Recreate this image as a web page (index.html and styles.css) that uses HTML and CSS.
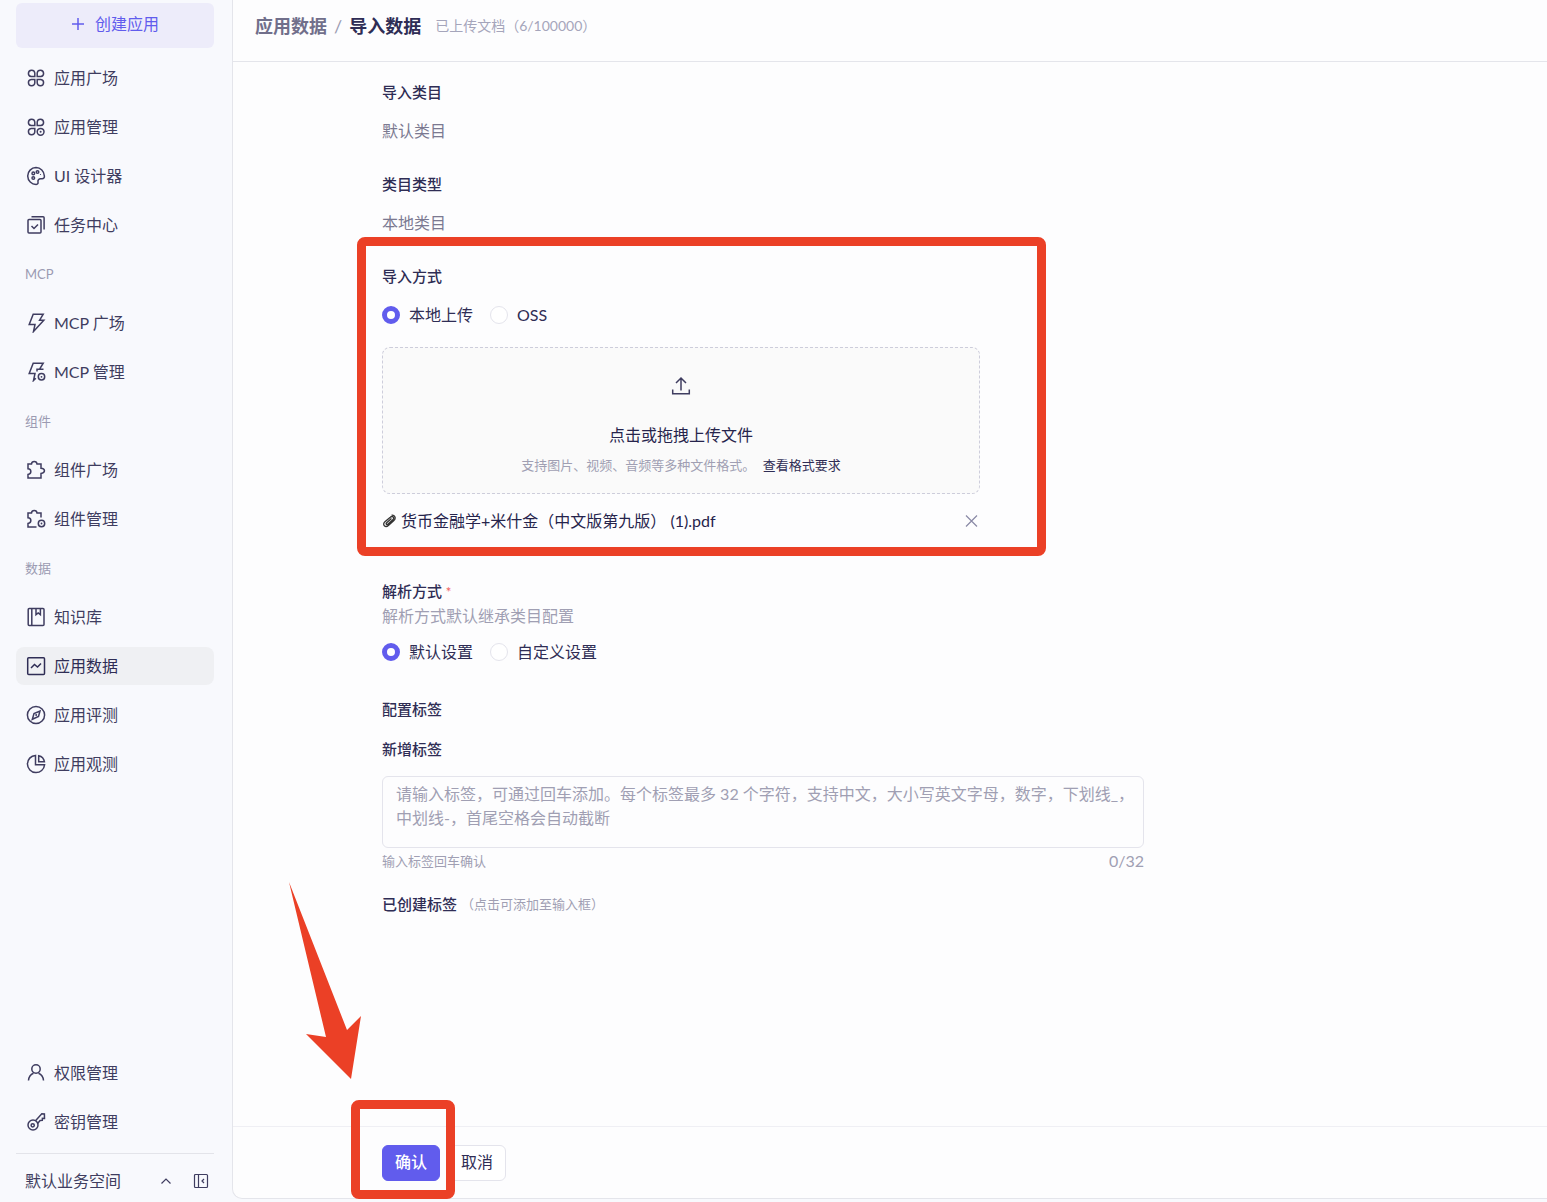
FILE: index.html
```html
<!DOCTYPE html>
<html lang="zh-CN">
<head>
  <meta charset="UTF-8">
  <title>导入数据</title>
  <link rel="stylesheet" href="styles.css">
</head>
<body>
  <div class="layout">
    <aside class="sidebar">
      <button class="create" type="button">
        <svg class="icon-plus" viewBox="0 0 14 14"><path d="M7 1v12M1 7h12"/></svg>
        创建应用
      </button>

      <nav class="nav">
        <a class="nav-item" href="#">
          <svg class="icon" viewBox="0 0 20 20"><path d="M8.8 8.6V5A3.2 3.2 0 1 0 5.2 8.6zM11.2 8.6V5a3.2 3.2 0 1 1 3.6 3.6zM8.8 11.4V15a3.2 3.2 0 1 1-3.6-3.6zM11.2 11.4V15a3.2 3.2 0 1 0 3.6-3.6z"/></svg>
          应用广场
        </a>
        <a class="nav-item" href="#">
          <svg class="icon" viewBox="0 0 20 20"><path d="M8.8 8.6V5A3.2 3.2 0 1 0 5.2 8.6zM11.2 8.6V5a3.2 3.2 0 1 1 3.6 3.6zM8.8 11.4V15a3.2 3.2 0 1 1-3.6-3.6z"/><circle cx="14.6" cy="14.8" r="3.4"/><circle class="dot" cx="14.6" cy="14.8" r="1"/></svg>
          应用管理
        </a>
        <a class="nav-item" href="#">
          <svg class="icon" viewBox="0 0 20 20"><path d="M10 1.6a8.4 8.4 0 1 0 .2 16.8c1.700 0 2-1.200 1.800-2.400-.400-2 .700-3.200 2.700-3.200h1.500c1.500 0 2.300-1 2.200-2.700C18.200 5.200 14.500 1.600 10 1.600z"/><circle cx="11.500" cy="6" r="1.300"/><circle cx="7.300" cy="7.400" r="1.300"/><circle cx="7.300" cy="12" r="1.300"/><circle class="dot" cx="14.500" cy="8.500" r=".6"/></svg>
          UI 设计器
        </a>
        <a class="nav-item" href="#">
          <svg class="icon" viewBox="0 0 20 20"><rect x="2" y="4.500" width="13" height="13.500" rx="1"/><path d="M5.500 1.700h11.600a1 1 0 0 1 1 1v11.800M5.500 11l2.500 2.500 4-4"/></svg>
          任务中心
        </a>

        <div class="nav-group">MCP</div>
        <a class="nav-item" href="#">
          <svg class="icon" viewBox="0 0 20 20"><path d="M7.200 1.200h10l-3.600 6h4.200L7.500 18.500l1.500-7H3.200z"/></svg>
          MCP 广场
        </a>
        <a class="nav-item" href="#">
          <svg class="icon" viewBox="0 0 20 20"><path d="M11 9.500V7.200h6.500M13.600 7.200l3.600-6h-10l-4 10.300H9l-1.500 7 2.300-2.200"/><circle cx="15.500" cy="14.800" r="3.200"/><circle class="dot" cx="15.500" cy="14.800" r=".9"/></svg>
          MCP 管理
        </a>

        <div class="nav-group">组件</div>
        <a class="nav-item" href="#">
          <svg class="icon" viewBox="0 0 20 20"><path d="M2 4h3.500c.300-3.400 5.200-3.400 5.500 0h4v4.300c4.600.300 4.600 4.800 0 5.100V18H2v-3.500c3.800-.500 3.800-5.500 0-5.800z"/></svg>
          组件广场
        </a>
        <a class="nav-item" href="#">
          <svg class="icon" viewBox="0 0 20 20"><path d="M15 8.500V4h-4C10.700.6 5.800.6 5.500 4H2v4.700c3.800.3 3.800 5.300 0 5.800V18h8.500"/><circle cx="15.500" cy="14.500" r="3.200"/><circle class="dot" cx="15.500" cy="14.500" r=".9"/></svg>
          组件管理
        </a>

        <div class="nav-group">数据</div>
        <a class="nav-item" href="#">
          <svg class="icon" viewBox="0 0 20 20"><rect x="2.200" y="1.500" width="15.800" height="17" rx="1"/><path d="M5.800 1.500v17M10 1.500v6.200l2.200-1.700 2.200 1.700V1.500"/></svg>
          知识库
        </a>
        <a class="nav-item active" href="#">
          <svg class="icon" viewBox="0 0 20 20"><rect x="1.700" y="1.700" width="16.800" height="16.800" rx="1"/><path d="M5 12l3.500-3.500 3 2.500L15 7.500"/></svg>
          应用数据
        </a>
        <a class="nav-item" href="#">
          <svg class="icon" viewBox="0 0 20 20"><circle cx="10" cy="10" r="8.600"/><path d="M14 6l-1.500 5.500-6.200 2.800L8 8.500z"/><circle class="dot" cx="10.200" cy="10" r="1"/></svg>
          应用评测
        </a>
        <a class="nav-item" href="#">
          <svg class="icon" viewBox="0 0 20 20"><path d="M9.500 1.400a8.600 8.600 0 1 0 9.100 9.400H9.500z"/><path d="M12.700 1.700v6h5.700c-.500-3.200-2.500-5.300-5.700-6z"/></svg>
          应用观测
        </a>
      </nav>

      <nav class="nav nav-bottom">
        <a class="nav-item" href="#">
          <svg class="icon" viewBox="0 0 20 20"><circle cx="10" cy="6" r="4.200"/><path d="M2.500 17.500c.300-3.700 2.200-6 5-7.200M17.500 17.500c-.300-3.700-2.200-6-5-7.200"/></svg>
          权限管理
        </a>
        <a class="nav-item" href="#">
          <svg class="icon" viewBox="0 0 20 20"><circle cx="7" cy="13" r="5"/><circle cx="6.700" cy="13.300" r="1.600"/><path d="M9.500 8.700l6.300-6.900 2.600.2.100 4.500-2.100-.2-.1 2-2.200.2-2.500 3"/></svg>
          密钥管理
        </a>
      </nav>

      <div class="workspace">
        <span class="workspace-name">默认业务空间</span>
        <button class="icon-btn" type="button" aria-label="切换业务空间">
          <svg class="icon-sm" viewBox="0 0 16 16"><path d="M3.500 10.500L8 6l4.500 4.500"/></svg>
        </button>
        <button class="icon-btn" type="button" aria-label="收起侧栏">
          <svg class="icon-sm" viewBox="0 0 16 16"><rect x="1.500" y="1.500" width="13" height="13" rx="1"/><path d="M5.500 1.500v13M11 6L9 8l2 2"/></svg>
        </button>
      </div>
    </aside>

    <main class="main">
      <header class="header">
        <a class="crumb" href="#">应用数据</a>
        <span class="slash">/</span>
        <h1 class="title">导入数据</h1>
        <span class="count">已上传文档（6/100000）</span>
      </header>

      <form class="form">
        <section class="field">
          <h2 class="label">导入类目</h2>
          <p class="value">默认类目</p>
        </section>

        <section class="field">
          <h2 class="label">类目类型</h2>
          <p class="value">本地类目</p>
        </section>

        <section class="field marked">
          <h2 class="label">导入方式</h2>
          <div class="radios">
            <label class="radio"><input type="radio" name="method" checked>本地上传</label>
            <label class="radio"><input type="radio" name="method">OSS</label>
          </div>
          <div class="upload">
            <svg class="icon" viewBox="0 0 20 20"><path d="M10 14.500V2M5 7l5-5 5 5M1.700 13.500v4.300h16.600v-4.300"/></svg>
            <label class="upload-title" for="file">点击或拖拽上传文件</label>
            <input class="file-input" type="file" id="file">
            <p class="upload-tip">支持图片、视频、音频等多种文件格式。 <a class="upload-link" href="#">查看格式要求</a></p>
          </div>
          <div class="file">
            <svg class="icon-clip" viewBox="0 0 16 16"><path d="M10.800 5.200L5.300 10c-1.300 1.200.1 2.700 1.400 1.600l5.600-4.900c2.600-2.400-.3-5.200-2.800-3L3.300 8.900c-3.500 3.200.5 7.300 4 4.200l6-5.300c3.500-3.400 1-6.900-2.300-6.400"/></svg>
            <span class="file-name">货币金融学+米什金（中文版第九版） (1).pdf</span>
            <button class="icon-btn" type="button" aria-label="删除">
              <svg class="icon-sm icon-close" viewBox="0 0 16 16"><path d="M2 2.500l11 11M13 2.500l-11 11"/></svg>
            </button>
          </div>
          <div class="mark mark-import"></div>
        </section>

        <section class="parse">
          <h2 class="label">解析方式 <span class="required">*</span></h2>
          <p class="desc">解析方式默认继承类目配置</p>
          <div class="radios">
            <label class="radio"><input type="radio" name="parse" checked>默认设置</label>
            <label class="radio"><input type="radio" name="parse">自定义设置</label>
          </div>
        </section>

        <section class="tags">
          <h2 class="label">配置标签</h2>
          <label class="label" for="tag">新增标签</label>
          <textarea class="tag-input" id="tag" placeholder="请输入标签，可通过回车添加。每个标签最多 32 个字符，支持中文，大小写英文字母，数字，下划线_，中划线-，首尾空格会自动截断"></textarea>
          <div class="tag-hint">
            <span>输入标签回车确认</span>
            <span class="tag-count">0/32</span>
          </div>
          <div class="created">
            <h2 class="label">已创建标签</h2>
            <span class="created-tip">（点击可添加至输入框）</span>
          </div>
        </section>
      </form>

      <footer class="footer">
        <div class="confirm">
          <button class="btn btn-primary" type="button">确认</button>
          <div class="mark mark-confirm"></div>
        </div>
        <button class="btn" type="button">取消</button>
      </footer>

      <svg class="arrow" viewBox="0 0 74 198"><path d="M2 0L60 148l14-14-10 63-45-45 20 3z"/></svg>
    </main>
  </div>
</body>
</html>
```
FILE: styles.css
```css
* {
  box-sizing: border-box;
}

body {
  margin: 0;
  background: #f8f9fd;
  color: #3f3d60;
  font-family: Lato, "Noto Sans CJK SC", sans-serif;
  font-size: 16px;
  line-height: 24px;
}

h1, h2, p {
  margin: 0;
}

a {
  color: inherit;
  text-decoration: none;
}

button, textarea {
  font: inherit;
  color: inherit;
}

svg {
  display: block;
  flex: none;
  fill: none;
  stroke: currentColor;
  stroke-width: 1.5;
}

.layout {
  display: flex;
  min-height: 100vh;
}

/* sidebar */
.sidebar {
  flex: none;
  display: flex;
  flex-direction: column;
  width: 232px;
  padding: 3px 18px 0 16px;
}

.create {
  display: flex;
  align-items: center;
  justify-content: center;
  gap: 10px;
  height: 45px;
  margin-bottom: 11px;
  padding: 0 0 3px;
  border: none;
  border-radius: 6px;
  background: #edecfa;
  color: #615ced;
}

.nav {
  display: flex;
  flex-direction: column;
  gap: 11px;
}

.nav-item {
  display: flex;
  align-items: center;
  gap: 8px;
  height: 38px;
  padding: 0 10px;
  border-radius: 8px;
}

.nav-item.active {
  background: #eff0f3;
  color: #2f2d55;
}

.nav-group {
  height: 38px;
  padding: 0 9px;
  color: #9b9bb2;
  font-size: 13px;
  line-height: 38px;
}

.nav-bottom {
  margin-top: auto;
}

.workspace {
  display: flex;
  align-items: center;
  gap: 19px;
  height: 49px;
  margin-top: 12px;
  padding: 6px 5px 0 9px;
  border-top: 1px solid #e3e4ea;
}

.workspace-name {
  flex: 1;
}

.icon {
  width: 20px;
  height: 20px;
}

.icon .dot {
  fill: currentColor;
  stroke: none;
}

.icon-plus {
  width: 14px;
  height: 14px;
}

.icon-sm {
  width: 16px;
  height: 16px;
  stroke-width: 1.2;
}

.icon-btn {
  padding: 0;
  border: none;
  background: none;
}

/* main */
.main {
  flex: 1;
  display: flex;
  flex-direction: column;
  position: relative;
  margin-bottom: 3px;
  border: 1px solid #e4e5eb;
  border-width: 0 0 1px 1px;
  border-bottom-left-radius: 10px;
  background: #fdfdfe;
}

.header {
  display: flex;
  align-items: center;
  height: 62px;
  padding: 0 22px 10px;
  border-bottom: 1px solid #e4e5eb;
  font-size: 18px;
}

.crumb {
  color: #716f8b;
  font-weight: 700;
}

.slash {
  margin: 0 7px;
  color: #9b9bb2;
}

.title {
  color: #2f2d55;
  font-size: 18px;
  font-weight: 700;
}

.count {
  margin-left: 14px;
  color: #a5a5bb;
  font-size: 14px;
}

.form {
  flex: 1;
  width: 100%;
  max-width: 911px;
  padding: 18px 0 18px 149px;
}

.field {
  margin-bottom: 29px;
}

.label {
  display: block;
  color: #2f2d55;
  font-size: 15px;
  font-weight: 500;
}

.value {
  margin-top: 15px;
  color: #7b7991;
}

.marked {
  position: relative;
  margin-bottom: 46px;
}

.radios {
  display: flex;
  gap: 17px;
  margin-top: 15px;
}

.radio {
  display: flex;
  align-items: center;
  gap: 9px;
  color: #2f2d55;
}

.radio input {
  appearance: none;
  width: 18px;
  height: 18px;
  margin: 0;
  border: 1px solid #e4e4ec;
  border-radius: 50%;
  background: #fff;
}

.radio input:checked {
  border: 5px solid #615ced;
}

.upload {
  display: flex;
  flex-direction: column;
  align-items: center;
  max-width: 598px;
  margin-top: 20px;
  padding: 28px 16px 16px;
  border: 1px dashed #cdcddb;
  border-radius: 8px;
  background: #fafafa;
}

.upload-title {
  margin: 27px 0 6px;
  color: #26244c;
}

.file-input {
  display: none;
}

.upload-tip {
  color: #a09fb3;
  font-size: 13px;
}

.upload-link {
  margin-left: 4px;
  color: #2f2d55;
}

.file {
  display: flex;
  align-items: center;
  gap: 5px;
  max-width: 598px;
  margin-top: 15px;
}

.icon-clip {
  width: 14px;
  height: 14px;
  color: #333;
}

.file-name {
  flex: 1;
  color: #26244c;
}

.icon-close {
  color: #8a89a6;
}

.required {
  color: #f0605a;
  font-size: 13px;
}

.desc {
  color: #a09fb3;
}

.parse .radios {
  margin-top: 12px;
}

.tags {
  display: flex;
  flex-direction: column;
  margin-top: 33px;
}

label.label {
  margin: 16px 0 15px;
}

.tag-input {
  height: 72px;
  padding: 5px 4px 5px 13px;
  border: 1px solid #e4e4ec;
  border-radius: 6px;
  outline: none;
  background: none;
  resize: none;
}

.tag-input::placeholder {
  color: #a09fb3;
}

.tag-hint {
  display: flex;
  justify-content: space-between;
  margin-top: 1px;
  color: #a09fb3;
  font-size: 13px;
}

.tag-count {
  font-size: 16px;
}

.created {
  display: flex;
  margin-top: 19px;
}

.created-tip {
  margin-left: 4px;
  color: #a09fb3;
  font-size: 13px;
}

.footer {
  display: flex;
  gap: 8px;
  padding: 18px 149px 17px;
  border-top: 1px solid #efeff4;
}

.confirm {
  position: relative;
}

.btn {
  height: 36px;
  padding: 0 12px 2px;
  border: 1px solid #e4e4ec;
  border-radius: 6px;
  background: #fff;
  color: #2f2d55;
}

.btn-primary {
  border-color: #615ced;
  background: #615ced;
  color: #fff;
  font-weight: 500;
}

/* red marks over the page */
.mark {
  position: absolute;
  border: 9px solid #eb4026;
  border-radius: 8px;
  pointer-events: none;
  z-index: 1;
}

.mark-import {
  inset: -27px 98px -23px -25px;
}

.mark-confirm {
  inset: -45px -15px -18px -31px;
}

.arrow {
  position: absolute;
  left: 54px;
  bottom: 118px;
  width: 74px;
  height: 198px;
  pointer-events: none;
}

.arrow path {
  fill: #eb4026;
  stroke: none;
}
```
